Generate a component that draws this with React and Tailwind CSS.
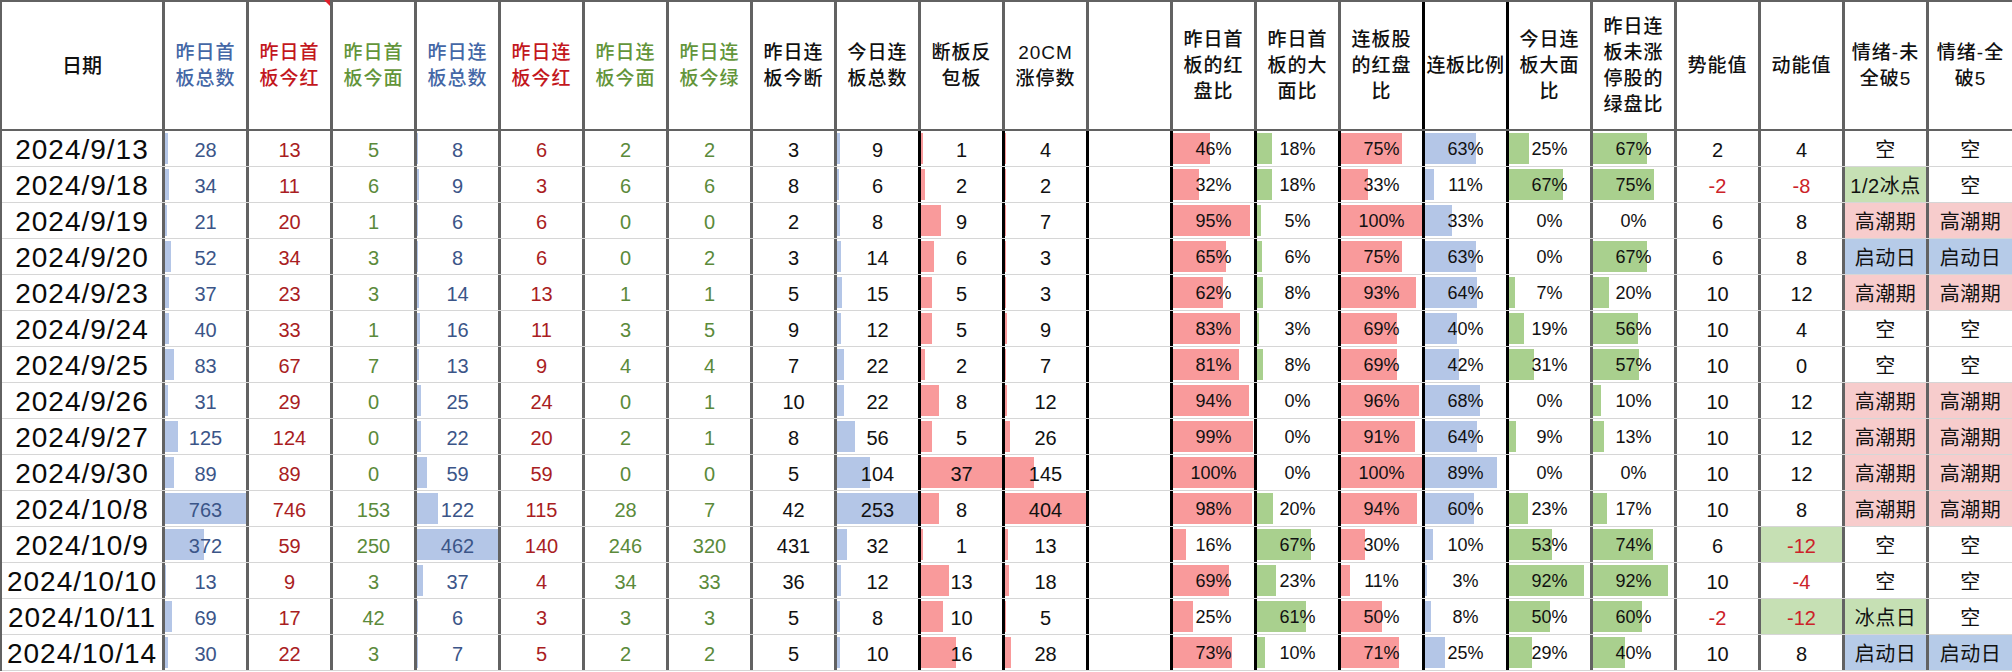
const BLUE_H = 'text-[#4467a6]';
const RED_H = 'text-[#c3171d]';
const GREEN_H = 'text-[#63953a]';
const BLUE_T = 'text-[#3b5588]';
const RED_T = 'text-[#a91d22]';
const GREEN_T = 'text-[#5b8a3a]';

const BAR_BLUE = 'bg-[#b4c6e7]';
const BAR_RED = 'bg-[#f99a9b]';
const BAR_GREEN = 'bg-[#a9d08e]';

// column setup, left to right after the date
const cols = [
  { h: ['昨日首', '板总数'], hc: BLUE_H, tc: BLUE_T, bar: BAR_BLUE, max: 763 },
  { h: ['昨日首', '板今红'], hc: RED_H, tc: RED_T, flag: true },
  { h: ['昨日首', '板今面'], hc: GREEN_H, tc: GREEN_T },
  { h: ['昨日连', '板总数'], hc: BLUE_H, tc: BLUE_T, bar: BAR_BLUE, max: 462 },
  { h: ['昨日连', '板今红'], hc: RED_H, tc: RED_T },
  { h: ['昨日连', '板今面'], hc: GREEN_H, tc: GREEN_T },
  { h: ['昨日连', '板今绿'], hc: GREEN_H, tc: GREEN_T },
  { h: ['昨日连', '板今断'] },
  { h: ['今日连', '板总数'], bar: BAR_BLUE, max: 253 },
  { h: ['断板反', '包板'], bar: BAR_RED, max: 37, dark: true },
  { h: ['20CM', '涨停数'], bar: BAR_RED, max: 404, dark: true },
  { h: [], dark: true },
  { h: ['昨日首', '板的红', '盘比'], bar: BAR_RED, pct: true, dark: true },
  { h: ['昨日首', '板的大', '面比'], bar: BAR_GREEN, pct: true, dark: true },
  { h: ['连板股', '的红盘', '比'], bar: BAR_RED, pct: true, dark: true },
  { h: ['连板比例'], bar: BAR_BLUE, pct: true, dark: true, hdark: true, tight: true },
  { h: ['今日连', '板大面', '比'], bar: BAR_GREEN, pct: true, dark: true, hdark: true },
  { h: ['昨日连', '板未涨', '停股的', '绿盘比'], bar: BAR_GREEN, pct: true },
  { h: ['势能值'], sign: true },
  { h: ['动能值'], sign: true },
  { h: ['情绪-未', '全破5'], mood: true },
  { h: ['情绪-全', '破5'], mood: true },
];

const moodBg = {
  '高潮期': 'bg-[#f7cccc]',
  '启动日': 'bg-[#b6cbe8]',
  '冰点日': 'bg-[#c6e0b4]',
  '1/2冰点': 'bg-[#c6e0b4]',
};

const rows = [
  ['2024/9/13', 28, 13, 5, 8, 6, 2, 2, 3, 9, 1, 4, '', 46, 18, 75, 63, 25, 67, 2, 4, '空', '空'],
  ['2024/9/18', 34, 11, 6, 9, 3, 6, 6, 8, 6, 2, 2, '', 32, 18, 33, 11, 67, 75, -2, -8, '1/2冰点', '空'],
  ['2024/9/19', 21, 20, 1, 6, 6, 0, 0, 2, 8, 9, 7, '', 95, 5, 100, 33, 0, 0, 6, 8, '高潮期', '高潮期'],
  ['2024/9/20', 52, 34, 3, 8, 6, 0, 2, 3, 14, 6, 3, '', 65, 6, 75, 63, 0, 67, 6, 8, '启动日', '启动日'],
  ['2024/9/23', 37, 23, 3, 14, 13, 1, 1, 5, 15, 5, 3, '', 62, 8, 93, 64, 7, 20, 10, 12, '高潮期', '高潮期'],
  ['2024/9/24', 40, 33, 1, 16, 11, 3, 5, 9, 12, 5, 9, '', 83, 3, 69, 40, 19, 56, 10, 4, '空', '空'],
  ['2024/9/25', 83, 67, 7, 13, 9, 4, 4, 7, 22, 2, 7, '', 81, 8, 69, 42, 31, 57, 10, 0, '空', '空'],
  ['2024/9/26', 31, 29, 0, 25, 24, 0, 1, 10, 22, 8, 12, '', 94, 0, 96, 68, 0, 10, 10, 12, '高潮期', '高潮期'],
  ['2024/9/27', 125, 124, 0, 22, 20, 2, 1, 8, 56, 5, 26, '', 99, 0, 91, 64, 9, 13, 10, 12, '高潮期', '高潮期'],
  ['2024/9/30', 89, 89, 0, 59, 59, 0, 0, 5, 104, 37, 145, '', 100, 0, 100, 89, 0, 0, 10, 12, '高潮期', '高潮期'],
  ['2024/10/8', 763, 746, 153, 122, 115, 28, 7, 42, 253, 8, 404, '', 98, 20, 94, 60, 23, 17, 10, 8, '高潮期', '高潮期'],
  ['2024/10/9', 372, 59, 250, 462, 140, 246, 320, 431, 32, 1, 13, '', 16, 67, 30, 10, 53, 74, 6, -12, '空', '空'],
  ['2024/10/10', 13, 9, 3, 37, 4, 34, 33, 36, 12, 13, 18, '', 69, 23, 11, 3, 92, 92, 10, -4, '空', '空'],
  ['2024/10/11', 69, 17, 42, 6, 3, 3, 3, 5, 8, 10, 5, '', 25, 61, 50, 8, 50, 60, -2, -12, '冰点日', '空'],
  ['2024/10/14', 30, 22, 3, 7, 5, 2, 2, 5, 10, 16, 28, '', 73, 10, 71, 25, 29, 40, 10, 8, '启动日', '启动日'],
];

// 动能值 cells that carry a green fill
const greenCells = { '2024/10/9': true, '2024/10/11': true };

function HeaderCell({ col, last }) {
  return (
    <div
      className={`relative h-full ${last ? 'flex-1' : 'w-[84px]'} shrink-0 border-l-[3px] ${col.hdark ? 'border-black' : 'border-[#626262]'} flex flex-col items-center justify-center font-medium ${col.hc || 'text-[#111]'} ${col.tight ? 'text-[19px] tracking-[0.5px]' : 'text-[19px] tracking-[1px]'} leading-[26px] whitespace-nowrap`}
    >
      {col.h.map((l, i) => (
        <span key={i}>{l}</span>
      ))}
      {col.flag && (
        <span className="absolute -top-[2px] right-0 w-0 h-0 border-l-[6px] border-l-transparent border-t-[6px] border-t-[#e0202a]"></span>
      )}
    </div>
  );
}

function DataCell({ col, v, date, ci, last }) {
  let width = 0;
  if (col.bar && typeof v === 'number') {
    width = col.pct ? v : (v / col.max) * 100;
  }
  let text = v;
  if (col.pct) text = `${v}%`;

  let color = col.tc || 'text-[#111]';
  if (col.sign && v < 0) color = 'text-[#cc2229]';

  let bg = 'bg-white';
  if (col.mood && moodBg[v]) bg = moodBg[v];
  if (ci === 19 && greenCells[date]) bg = 'bg-[#c6e0b4]';

  const size = col.pct ? 'text-[18px]' : col.mood ? 'text-[20px] tracking-[0.5px]' : 'text-[20px]';

  return (
    <div
      className={`relative h-full ${last ? 'flex-1' : 'w-[84px]'} shrink-0 border-l-[3px] ${col.dark ? 'border-black' : 'border-[#626262]'} ${bg} flex items-center justify-center`}
    >
      {width > 0 && (
        <div className={`absolute left-0 top-[2px] bottom-[2px] ${col.bar}`} style={{ width: `${width}%` }}></div>
      )}
      <span className={`relative ${size} ${color} pt-[2px] whitespace-nowrap`}>{text}</span>
    </div>
  );
}

export default function App() {
  return (
    <div className="w-[2012px] h-[672px] overflow-hidden bg-white font-['Liberation_Sans','Noto_Sans_CJK_SC',sans-serif]">
      <div className="border-t-2 border-l-2 border-[#626262]">
        {/* header */}
        <div className="flex h-[129px] border-b-[2px] border-[#626262]">
          <div className="w-[160px] shrink-0 flex items-center justify-center text-[20px] font-medium text-[#111]">日期</div>
          {cols.map((c, i) => (
            <HeaderCell key={i} col={c} last={i === cols.length - 1} />
          ))}
        </div>

        {/* rows */}
        {rows.map((r) => (
          <div key={r[0]} className="flex h-[36px] border-b border-[#d6d6d6]">
            <div className="w-[160px] shrink-0 flex items-center justify-center text-[28px] tracking-[1px] text-[#0a0a0a] pt-[2px]">
              {r[0]}
            </div>
            {cols.map((c, i) => (
              <DataCell key={i} col={c} v={r[i + 1]} date={r[0]} ci={i} last={i === cols.length - 1} />
            ))}
          </div>
        ))}
      </div>
    </div>
  );
}
